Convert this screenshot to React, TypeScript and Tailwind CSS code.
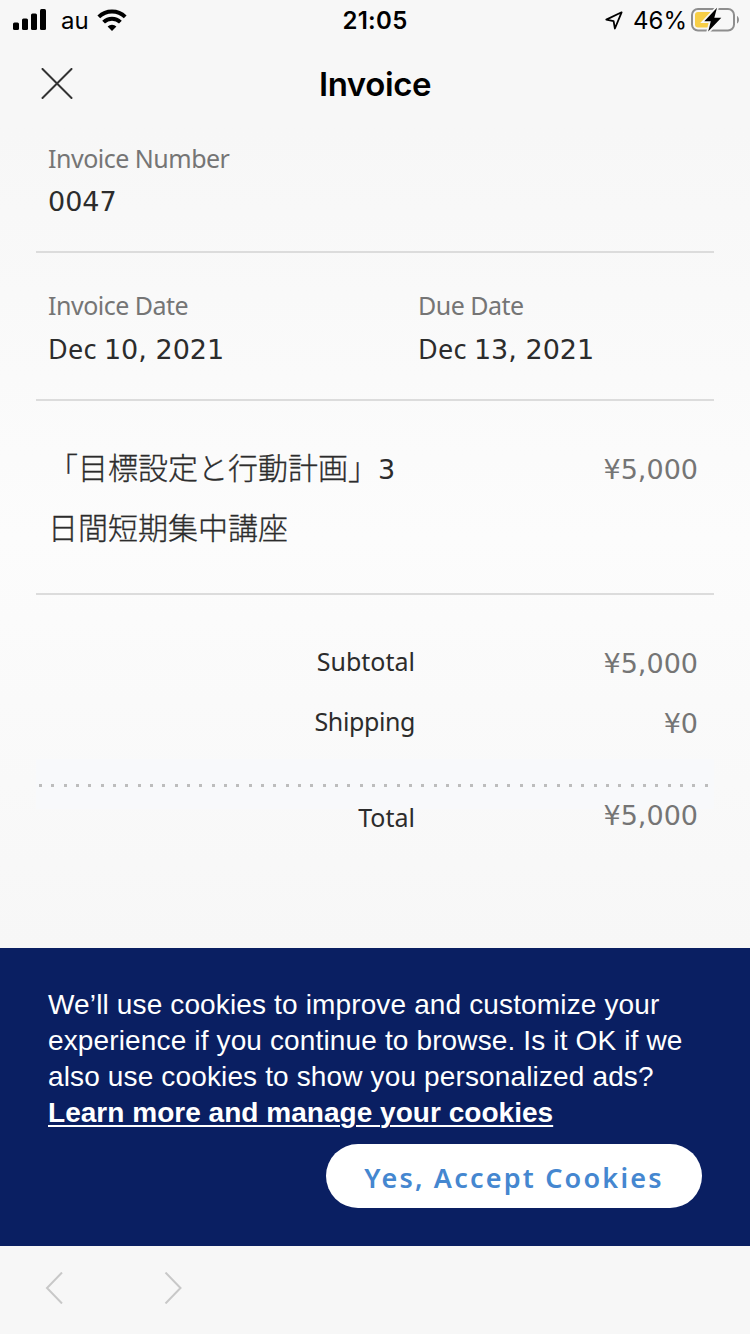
import React from 'react'
import clsx from 'clsx'

const sans = "font-['Noto_Sans',sans-serif]"
const numeric = "font-['DejaVu_Sans',sans-serif] text-[27px]"

const dots = Array.from({ length: 55 }, (_, i) => i)

const SignalIcon = () => (
  <svg width="34" height="22" viewBox="0 0 34 22" fill="#000">
    <rect x="0" y="13.5" width="6" height="7.5" rx="1.5" />
    <rect x="9" y="9.5" width="6" height="11.5" rx="1.5" />
    <rect x="18" y="4.5" width="6" height="16.5" rx="1.5" />
    <rect x="27" y="0" width="6" height="21" rx="1.5" />
  </svg>
)

const WifiIcon = () => (
  <svg width="30" height="22" viewBox="0 0 30 22" fill="none">
    <path d="M1.8 7.9a19 19 0 0 1 26.4 0" stroke="#000" strokeWidth="4" />
    <path d="M6.6 13.1a12.2 12.2 0 0 1 16.8 0" stroke="#000" strokeWidth="4" />
    <path d="M15 22l-4.4-4.6a6.4 6.4 0 0 1 8.8 0z" fill="#000" />
  </svg>
)

const LocationIcon = () => (
  <svg width="18" height="19" viewBox="0 0 18 19" fill="none">
    <path
      d="M16.6 1.3L1.3 8.6l7.3 1.5 1.3 7.4z"
      stroke="#000"
      strokeWidth="1.8"
      strokeLinejoin="round"
    />
  </svg>
)

const BatteryIcon = () => (
  <svg width="49" height="26" viewBox="0 0 49 26" fill="none">
    <rect x="1" y="2" width="42" height="21.5" rx="6" stroke="#8e8e8e" strokeWidth="2" />
    <path d="M46 9c2.6 1 2.6 6.5 0 7.5z" fill="#8e8e8e" />
    <path d="M7 5h16v15.5H7a3 3 0 0 1-3-3V8a3 3 0 0 1 3-3z" fill="#f7ce46" />
    <path
      d="M26 0.8L13.3 14.2h6.5L17.2 24.6 30.3 10.7h-7z"
      fill="#000"
      stroke="#f7f7f7"
      strokeWidth="3.5"
      paintOrder="stroke"
    />
  </svg>
)

const StatusBar = () => (
  <div className="grid h-10 grid-cols-3 items-center font-['Inter',sans-serif] text-black">
    <div className="flex items-center pl-[13px]">
      <SignalIcon />
      <span className="ml-[14px] pt-0.5 text-[24px] leading-9">au</span>
      <span className="ml-[8px]">
        <WifiIcon />
      </span>
    </div>
    <span className="pt-px text-center text-[24px] font-semibold leading-9 tracking-[0.3px]">
      21:05
    </span>
    <div className="flex items-center justify-end pr-[10px]">
      <LocationIcon />
      <span className="ml-[10px] mr-[4px] pt-0.5 text-[24px] leading-9">46%</span>
      <BatteryIcon />
    </div>
  </div>
)

type FieldProps = {
  label: string
  month?: string
  value: string
  className?: string
}

const Field = ({ label, month, value, className }: FieldProps) => (
  <div className={className}>
    <p className={clsx(sans, 'text-[25px] leading-9 tracking-[-0.5px] text-[#757575]')}>{label}</p>
    <p className="mt-[8px] h-9 leading-9 text-[#2c2c2c]">
      {month && <span className={clsx(sans, 'text-[27px] tracking-[0.25px]')}>{month} </span>}
      <span className={numeric}>{value}</span>
    </p>
  </div>
)

const Amount = ({ children }: { children: string }) => (
  <span className={clsx(numeric, 'pt-px leading-[60px] text-[#757575]')}>{children}</span>
)

type SummaryRowProps = {
  label: string
  amount: string
  labelClassName?: string
}

const SummaryRow = ({ label, amount, labelClassName }: SummaryRowProps) => (
  <div className="flex h-[60px] justify-between">
    <span
      className={clsx(
        sans,
        'w-[367px] text-right text-[25px] text-[#2c2c2c]',
        labelClassName,
      )}
    >
      {label}
    </span>
    <Amount>{amount}</Amount>
  </div>
)

const CookieBanner = () => (
  <div className="flex h-[298px] flex-col bg-[#0a1f62] px-12 pt-[39px] font-['Liberation_Sans',sans-serif] text-[28px] leading-9 tracking-[0.14px] text-white">
    <p className="whitespace-nowrap">
      We’ll use cookies to improve and customize your
      <br />
      experience if you continue to browse. Is it OK if we
      <br />
      also use cookies to show you personalized ads?
      <br />
      <a className="font-bold tracking-[0.03px] underline decoration-2 underline-offset-[3px]">
        Learn more and manage your cookies
      </a>
    </p>
    <button
      className={clsx(
        sans,
        'mt-[13px] h-16 w-[376px] self-end rounded-full bg-white pt-[3px] text-[27px] font-semibold tracking-[2.2px] text-[#4587d0]',
      )}
    >
      Yes, Accept Cookies
    </button>
  </div>
)

const App = () => {
  return (
    <div className="flex h-[1334px] w-[750px] flex-col overflow-hidden bg-[#f7f7f7]">
      <StatusBar />
      <header className="grid h-[88px] grid-cols-3 items-center px-[41px]">
        <svg width="32" height="32" viewBox="0 0 32 32" stroke="#333" strokeWidth="2" strokeLinecap="round">
          <path d="M1.5 1L30.5 30M30.5 1L1.5 30" />
        </svg>
        <h1 className="pt-0.5 text-center font-['Inter',sans-serif] text-[33px] font-semibold tracking-[-0.4px] text-black">
          Invoice
        </h1>
      </header>

      <main className="flex h-[820px] flex-col bg-linear-to-b from-[#f7f7f7] via-[#fcfcfc] to-[#f7f7f7] px-9">
        <section className="h-[125px] border-b-2 border-[#dcdcdc] px-3 pt-[12px]">
          <Field label="Invoice Number" value="0047" />
        </section>
        <section className="flex h-[148px] border-b-2 border-[#dcdcdc] px-3 pt-[34px]">
          <Field label="Invoice Date" month="Dec" value="10, 2021" className="w-[370px]" />
          <Field label="Due Date" month="Dec" value="13, 2021" />
        </section>
        <section className="flex h-[194px] justify-between border-b-2 border-[#dcdcdc] pl-3 pr-4 pt-[38px]">
          <p className="-mt-[3px] font-['Noto_Sans_CJK_JP',sans-serif] text-[30px] font-light leading-[60px] text-[#2c2c2c] [-webkit-text-stroke:0.3px_#2c2c2c]">
            「目標設定と行動計画」
            <span className={clsx(numeric, 'font-normal leading-none [-webkit-text-stroke:0]')}>3</span>
            <br />
            日間短期集中講座
          </p>
          <Amount>¥5,000</Amount>
        </section>
        <section className="pl-3 pr-4 pt-[38px]">
          <SummaryRow label="Subtotal" amount="¥5,000" labelClassName="leading-[57px]" />
          <SummaryRow label="Shipping" amount="¥0" labelClassName="leading-[57px] tracking-[-0.4px]" />
        </section>
        <div className="mt-[6px] flex h-[50px] items-center justify-between bg-[#f8f9fb] pl-[3px] pr-[6px] pt-[3px]">
          {dots.map((dot) => (
            <span key={dot} className="size-[3px] bg-[#bdbdbd]" />
          ))}
        </div>
        <section className="-mt-[24px] pl-3 pr-4">
          <SummaryRow label="Total" amount="¥5,000" labelClassName="leading-[64px]" />
        </section>
      </main>

      <CookieBanner />

      <nav className="flex h-[88px] items-center gap-[101px] px-[45px] pb-1">
        <svg width="18" height="32" viewBox="0 0 18 32" fill="none" stroke="#c8c8c8" strokeWidth="2">
          <path d="M17 0.5L2 16l15 15.5" />
        </svg>
        <svg width="18" height="32" viewBox="0 0 18 32" fill="none" stroke="#c8c8c8" strokeWidth="2">
          <path d="M1.5 0.5L16.5 16l-15 15.5" />
        </svg>
      </nav>
    </div>
  )
}

export default App
